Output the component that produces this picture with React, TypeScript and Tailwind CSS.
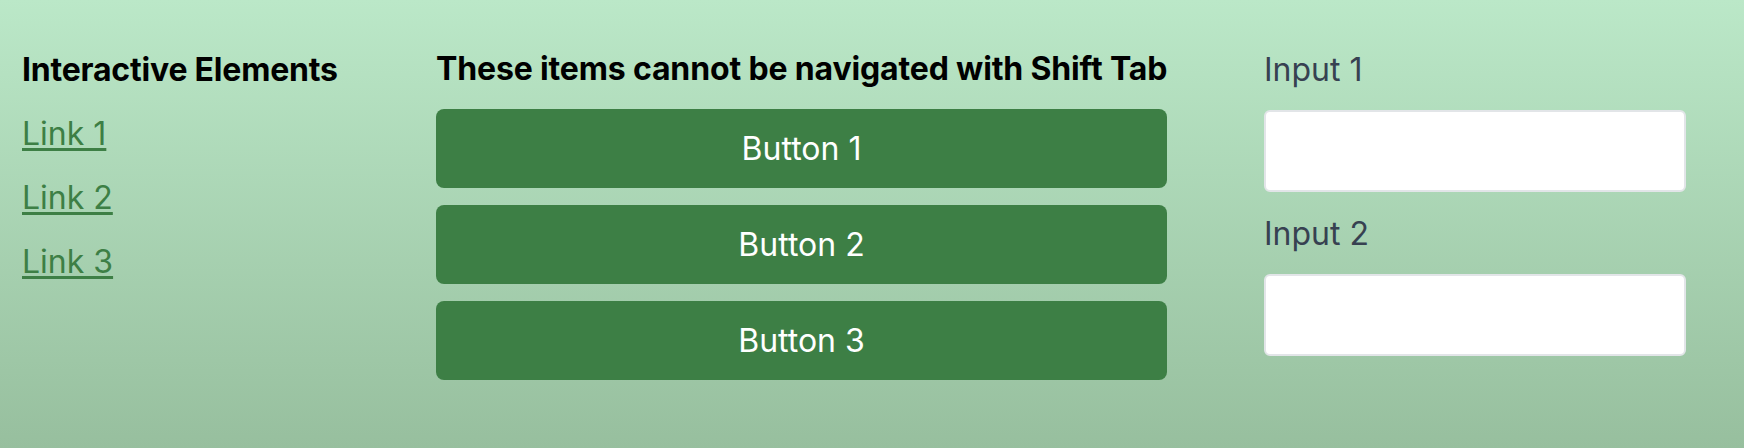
const links = ['Link 1', 'Link 2', 'Link 3'];
const buttons = ['Button 1', 'Button 2', 'Button 3'];
const inputs = ['Input 1', 'Input 2'];

export default function App() {
  return (
    <div
      className="h-[448px] w-full bg-linear-to-b from-[#bbe8c8] to-[#97bf9e] pl-[22px] pt-[50px] text-[32px] leading-[40px]"
      style={{ fontFamily: 'Inter, "Noto Sans", sans-serif' }}
    >
      <div className="flex items-start gap-[97px]">
        <div className="flex w-[317px] flex-col gap-[24px]">
          <h2 className="whitespace-nowrap font-bold tracking-[-0.2px] text-black">
            Interactive Elements
          </h2>
          {links.map((l) => (
            <a
              key={l}
              href="#"
              className="w-fit text-[#3d7f45] underline decoration-[2.5px] underline-offset-[3px]"
            >
              {l}
            </a>
          ))}
        </div>

        <div className="-mt-px flex w-[731px] flex-col">
          <h2 className="mb-[20px] whitespace-nowrap font-bold tracking-[-0.15px] text-black">
            These items cannot be navigated with Shift Tab
          </h2>
          <div className="flex flex-col gap-[17px]">
            {buttons.map((b) => (
              <button
                key={b}
                className="h-[79px] w-full rounded-[8px] bg-[#3d7f45] text-white"
              >
                {b}
              </button>
            ))}
          </div>
        </div>

        <div className="flex w-[422px] flex-col">
          {inputs.map((i) => (
            <label key={i} className="flex flex-col">
              <span className="mb-[20px] text-[#374151]">{i}</span>
              <input
                type="text"
                className="mb-[22px] h-[82px] w-full rounded-[6px] border-2 border-[#e2e5e8] bg-white px-4"
              />
            </label>
          ))}
        </div>
      </div>
    </div>
  );
}
